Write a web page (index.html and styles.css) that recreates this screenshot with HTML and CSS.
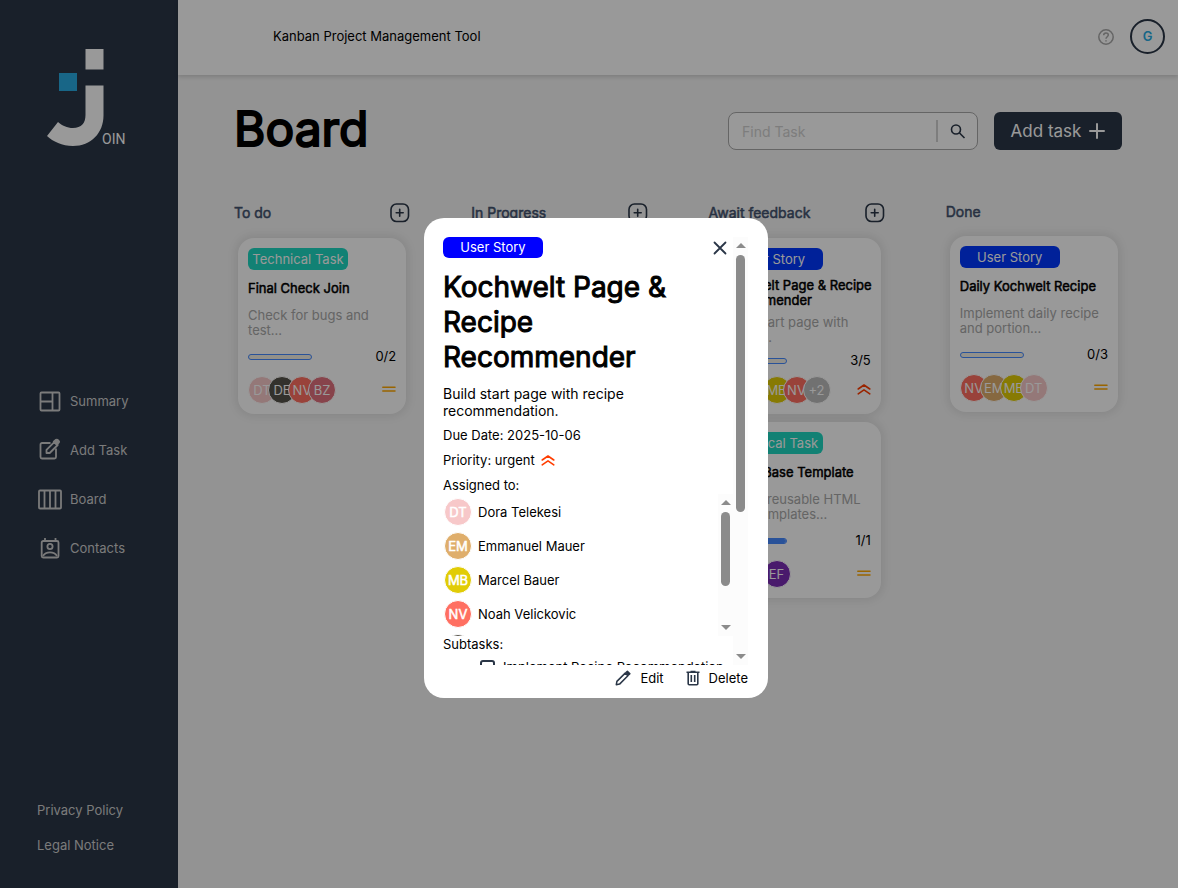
FILE: index.html
```html
<!DOCTYPE html>
<html lang="en">
<head>
<meta charset="utf-8">
<meta name="viewport" content="width=device-width, initial-scale=1">
<title>Join – Board</title>
<link rel="stylesheet" href="styles.css">
</head>
<body>
<svg class="sprite" aria-hidden="true">
  <symbol id="plus-box" viewBox="0 0 20 20"><rect x="1" y="1" width="17.500" height="17.500" rx="5.5" fill="none" stroke="#2a3647" stroke-width="1.6"/><path d="M9.700 6.200v7M6.200 9.700h7" stroke="#2a3647" stroke-width="1.6" stroke-linecap="round"/></symbol>
  <symbol id="medium" viewBox="0 0 14 8"><path d="M.8 1.200h12.200M.8 5h12.200" stroke="#ffa800" stroke-width="1.5" stroke-linecap="round"/></symbol>
  <symbol id="urgent" viewBox="0 0 14 12"><path d="M1.200 5L7 1l5.800 4M1.200 9.800L7 5.800l5.800 4" fill="none" stroke="#ff3d00" stroke-width="1.6" stroke-linecap="round" stroke-linejoin="round"/></symbol>
</svg>

<div class="app">
  <aside class="sidebar">
    <a class="logo" href="#" aria-label="Join">
      <svg width="80" height="98" viewBox="0 0 80 98">
        <path d="M38.5 0h18v20.500h-18z" fill="#fff"/>
        <path d="M12 24h18v18H12z" fill="#29abe2"/>
        <path d="M38.500 36.500h18v30C56.500 84 44 97 26 97 15 97 6 92.500 0 87l11-14c4 3.500 9 6 15 6 8.500 0 12.500-5 12.500-13z" fill="#fff"/>
        <text class="logo-text" x="55" y="95">OIN</text>
      </svg>
    </a>
    <nav class="nav">
      <a href="#"><svg width="24" height="24" viewBox="0 0 24 24" fill="none" stroke="currentColor" stroke-width="1.800"><rect x="2.500" y="3.500" width="19" height="18" rx="1"/><path d="M14.500 3.500v18M3 12.500h11.500"/></svg>Summary</a>
      <a href="#"><svg width="24" height="24" viewBox="0 0 24 24" fill="none" stroke="currentColor" stroke-width="1.800"><path d="M12.500 5H4a1.500 1.500 0 0 0-1.500 1.500V19A1.500 1.500 0 0 0 4 20.500h12.500A1.500 1.500 0 0 0 18 19v-8.500"/><path d="M8.500 15v-3.200l8-8 3.200 3.200-8 8z" stroke-linejoin="round"/><path d="M16 3.500l2-1.700c.7-.4 1.500-.2 2 .4l.6.600c.6.600.6 1.300.1 1.900l-2 2z" fill="currentColor"/></svg>Add Task</a>
      <a href="#"><svg width="24" height="24" viewBox="0 0 24 24" fill="none" stroke="currentColor" stroke-width="1.800"><rect x="1" y="3.500" width="22" height="18" rx="1"/><path d="M6.500 3.500v18M12 3.500v18M17.500 3.500v18"/></svg>Board</a>
      <a href="#"><svg width="24" height="24" viewBox="0 0 24 24" fill="none" stroke="currentColor" stroke-width="1.800"><rect x="3.700" y="5" width="16.800" height="16.500" rx="1.500"/><path d="M7 2v3M17.500 2v3"/><circle cx="12" cy="10.500" r="2.600"/><path d="M5 20c1.500-2.500 4-3.600 7-3.600s5.500 1.100 7 3.600"/></svg>Contacts</a>
    </nav>
    <div class="legal"><a href="#">Privacy Policy</a><a href="#">Legal Notice</a></div>
  </aside>

  <div class="page">
    <header class="topbar">
      <span>Kanban Project Management Tool</span>
      <div class="topbar-tools">
        <a href="#" aria-label="Help"><svg width="16" height="16" viewBox="0 0 16 16" fill="none" stroke="#a8a8a8" stroke-width="1.500"><circle cx="8" cy="8" r="7.200"/><path d="M5.700 6.300C5.700 4.900 6.700 4 8 4s2.300.9 2.300 2.100C10.300 7.600 8 7.900 8 9.800M8 11.200v1.400"/></svg></a>
        <button class="user" type="button">G</button>
      </div>
    </header>

    <main class="main">
      <div class="board-head">
        <h1>Board</h1>
        <div class="board-tools">
          <form class="search">
            <input type="search" placeholder="Find Task" aria-label="Find Task">
            <button type="button" aria-label="Search"><svg width="16" height="16" viewBox="0 0 16 16" fill="none" stroke="#2a3647" stroke-width="1.600"><circle cx="6" cy="6.500" r="4.500"/><path d="M9.300 9.800l5.200 5.200"/></svg></button>
          </form>
          <button class="add-task" type="button">Add task<svg width="16" height="16" viewBox="0 0 16 16" stroke="#fff" stroke-width="2" stroke-linecap="round"><path d="M8 1v14M1 8h14"/></svg></button>
        </div>
      </div>

      <div class="columns">
        <section class="column">
          <div class="column-head"><h2>To do</h2><button type="button" aria-label="Add to To do"><svg width="20" height="20"><use href="#plus-box"/></svg></button></div>
          <div class="cards">
            <article class="card">
              <span class="badge technical">Technical Task</span>
              <h3>Final Check Join</h3>
              <p>Check for bugs and test...</p>
              <div class="progress-row"><div class="progress"></div><span>0/2</span></div>
              <div class="card-foot"><div class="avatars"><span class="avatar pink">DT</span><span class="avatar dark">DE</span><span class="avatar coral">NV</span><span class="avatar rose">BZ</span></div><svg width="14" height="8"><use href="#medium"/></svg></div>
            </article>
          </div>
        </section>
        <section class="column">
          <div class="column-head"><h2>In Progress</h2><button type="button" aria-label="Add to In Progress"><svg width="20" height="20"><use href="#plus-box"/></svg></button></div>
        </section>
        <section class="column">
          <div class="column-head"><h2>Await feedback</h2><button type="button" aria-label="Add to Await feedback"><svg width="20" height="20"><use href="#plus-box"/></svg></button></div>
          <div class="cards">
            <article class="card">
              <span class="badge story">User Story</span>
              <h3>Kochwelt Page &amp; Recipe Recommender</h3>
              <p>Build start page with recipe...</p>
              <div class="progress-row"><div class="progress"><div class="progress-fill" style="width:60%"></div></div><span>3/5</span></div>
              <div class="card-foot"><div class="avatars"><span class="avatar pink">DT</span><span class="avatar sand">EM</span><span class="avatar yellow">MB</span><span class="avatar coral">NV</span><span class="avatar more">+2</span></div><svg width="14" height="12"><use href="#urgent"/></svg></div>
            </article>
            <article class="card">
              <span class="badge technical">Technical Task</span>
              <h3>HTML Base Template</h3>
              <p>Create reusable HTML base templates...</p>
              <div class="progress-row"><div class="progress"><div class="progress-fill" style="width:100%"></div></div><span>1/1</span></div>
              <div class="card-foot"><div class="avatars"><span class="avatar dark">DE</span><span class="avatar rose">BZ</span><span class="avatar purple">EF</span></div><svg width="14" height="8"><use href="#medium"/></svg></div>
            </article>
          </div>
        </section>
        <section class="column">
          <div class="column-head"><h2>Done</h2></div>
          <div class="cards">
            <article class="card">
              <span class="badge story">User Story</span>
              <h3>Daily Kochwelt Recipe</h3>
              <p>Implement daily recipe and portion...</p>
              <div class="progress-row"><div class="progress"></div><span>0/3</span></div>
              <div class="card-foot"><div class="avatars"><span class="avatar coral">NV</span><span class="avatar sand">EM</span><span class="avatar yellow">MB</span><span class="avatar pink">DT</span></div><svg width="14" height="8"><use href="#medium"/></svg></div>
            </article>
          </div>
        </section>
      </div>
    </main>
  </div>
</div>

<div class="overlay">
  <div class="dialog" role="dialog" aria-modal="true" aria-labelledby="task-title">
    <div class="scroll-pane dialog-pane">
      <div class="scroll-content">
        <div class="dialog-head">
          <span class="badge dialog-badge">User Story</span>
          <button type="button" aria-label="Close"><svg width="14" height="14" viewBox="0 0 14 14" stroke="#2a3647" stroke-width="1.800" stroke-linecap="round"><path d="M1.500 1.500l11 11M12.500 1.500l-11 11"/></svg></button>
        </div>
        <h2 class="dialog-title" id="task-title">Kochwelt Page &amp; Recipe Recommender</h2>
        <p class="dialog-desc">Build start page with recipe recommendation.</p>
        <p class="field">Due Date: 2025-10-06</p>
        <p class="field">Priority: urgent <svg width="14" height="12"><use href="#urgent"/></svg></p>
        <p class="field">Assigned to:</p>
        <div class="scroll-pane people-pane">
          <ul class="scroll-content people">
            <li><span class="avatar pink">DT</span>Dora Telekesi</li>
            <li><span class="avatar sand">EM</span>Emmanuel Mauer</li>
            <li><span class="avatar yellow">MB</span>Marcel Bauer</li>
            <li><span class="avatar coral">NV</span>Noah Velickovic</li>
            <li><span class="avatar dark"></span></li>
          </ul>
          <div class="scrollbar" aria-hidden="true"><i class="arrow up"></i><i class="thumb people-thumb"></i><i class="arrow down"></i></div>
        </div>
        <p class="subtasks-label">Subtasks:</p>
        <label class="subtask"><input type="checkbox">Implement Recipe Recommendation</label>
      </div>
      <div class="scrollbar" aria-hidden="true"><i class="arrow up"></i><i class="thumb dialog-thumb"></i><i class="arrow down"></i></div>
    </div>
    <div class="dialog-actions">
      <button type="button"><svg width="16" height="16" viewBox="0 0 16 16" fill="none" stroke="#2a3647" stroke-width="1.500" stroke-linejoin="round"><path d="M1.300 14.700l.6-3.300 8.300-8.300 2.700 2.700-8.300 8.300z"/><path d="M11 2.500l1.400-1.300 2.500 2.500-1.400 1.300z" fill="#2a3647"/></svg>Edit</button>
      <button type="button"><svg width="14" height="16" viewBox="0 0 14 16" fill="none" stroke="#2a3647" stroke-width="1.600"><path d="M.5 2.300h13M4.500 1.500h5M2.200 2.500v11.200c0 .6.400 1 1 1h7.600c.6 0 1-.4 1-1V2.500M5.300 5v7M8.700 5v7"/></svg>Delete</button>
    </div>
  </div>
</div>
</body>
</html>
```

FILE: styles.css
```css
* { box-sizing: border-box; }

body {
  margin: 0;
  font: 13px/15px Inter, "Liberation Sans", sans-serif;
  color: #000;
}

h1, h2, h3, p, ul { margin: 0; padding: 0; font-weight: 400; }
ul { list-style: none; }
a { color: inherit; text-decoration: none; }
svg { display: block; flex: none; }
button {
  display: flex;
  align-items: center;
  justify-content: center;
  padding: 0;
  border: 0;
  background: none;
  font: inherit;
  color: inherit;
  cursor: pointer;
}

.sprite { position: absolute; width: 0; height: 0; }

.app { display: flex; min-height: 100vh; }

/* Sidebar */
.sidebar {
  display: flex;
  flex-direction: column;
  flex: none;
  width: 178px;
  padding: 49px 0 35px;
  background: #2a3647;
  color: #cdcdcd;
}
.logo { margin-left: 47px; }
.logo-text { font: 14px "Liberation Sans Narrow", Roboto, sans-serif; fill: #fff; }
.nav { display: flex; flex-direction: column; gap: 25px; margin: 242px 0 auto 38px; }
.nav a { display: flex; align-items: center; gap: 8px; }
.legal { display: flex; flex-direction: column; gap: 20px; margin-left: 37px; }

/* Top bar */
.page { flex: 1; min-width: 0; background: #f5f5f5; }
.topbar {
  display: flex;
  align-items: center;
  justify-content: space-between;
  height: 75px;
  padding: 0 13px 2px 95px;
  background: #fff;
  box-shadow: 0 2px 4px rgba(0, 0, 0, 0.15);
}
.topbar-tools { display: flex; align-items: center; gap: 16px; }
.user {
  width: 35px;
  height: 35px;
  border: 2px solid #2a3647;
  border-radius: 50%;
  color: #29abe2;
  font-weight: 600;
}

/* Board heading */
.main { padding: 25px 56px; }
.board-head { display: flex; justify-content: space-between; align-items: center; }
h1 { font-size: 48px; line-height: 58px; -webkit-text-stroke: 2px #000; }
.board-tools { display: flex; gap: 16px; padding-top: 4px; }
.search {
  display: flex;
  width: 250px;
  height: 38px;
  padding: 7px 0;
  border: 1px solid #a8a8a8;
  border-radius: 8px;
  background: #fff;
}
.search input {
  flex: 1;
  min-width: 0;
  padding: 0 13px;
  border: 0;
  border-right: 2px solid #d1d1d1;
  background: none;
  font: 14px Inter, sans-serif;
  outline: 0;
}
.search input::placeholder { color: #d1d1d1; }
.search button { width: 39px; }
.add-task {
  gap: 8px;
  width: 128px;
  height: 38px;
  border-radius: 6px;
  background: #2a3647;
  color: #fff;
  font-size: 17px;
}

/* Columns and cards */
.columns { display: grid; grid-template-columns: repeat(4, 1fr); gap: 60px; margin: 45px -1px 0 0; }
.column-head { display: flex; align-items: center; justify-content: space-between; padding-right: 1px; }
.column-head h2 {
  font-size: 14px;
  line-height: 18px;
  color: #42526e;
  -webkit-text-stroke: 0.5px #42526e;
  white-space: nowrap;
}
.cards { display: flex; flex-direction: column; gap: 8px; padding: 15px 5px 0 4px; }
.card {
  display: flex;
  flex-direction: column;
  justify-content: space-between;
  height: 176px;
  padding: 10px;
  border-radius: 16px;
  background: #fff;
  box-shadow: 0 0 8px 3px rgba(0, 0, 0, 0.08);
}
.badge {
  flex: none;
  width: 100px;
  height: 22px;
  border-radius: 6px;
  color: #fff;
  line-height: 22px;
  text-align: center;
}
.technical { background: #1fd7c1; }
.story { background: #0038ff; }
.card h3 { margin-right: -6px; font-size: 13px; -webkit-text-stroke: 0.5px #000; }
.card p { color: #a8a8a8; }
.progress-row { display: flex; align-items: center; justify-content: space-between; height: 16px; }
.progress {
  width: 64px;
  height: 6px;
  border: 1px solid #4589ff;
  border-radius: 4px;
  background: #f4f0e6;
  overflow: hidden;
}
.progress-fill { height: 100%; background: #4589ff; }
.card-foot { display: flex; align-items: center; justify-content: space-between; }
.avatars { display: flex; }
.avatars .avatar + .avatar { margin-left: -8px; }
.avatar {
  flex: none;
  width: 28px;
  height: 28px;
  border: 1px solid #fff;
  border-radius: 50%;
  color: #fff;
  line-height: 26px;
  text-align: center;
}
.pink { background: #f7c8c9; }
.dark { background: #56534a; }
.coral { background: #ff6f61; }
.rose { background: #e2707d; }
.sand { background: #dfae6b; }
.yellow { background: #e1cc06; }
.purple { background: #7b2cb5; }
.more { background: #bdbdbd; }

/* Task dialog */
.overlay {
  position: fixed;
  inset: 0;
  display: flex;
  align-items: center;
  justify-content: center;
  padding: 28px 0 0 14px;
  background: rgba(0, 0, 0, 0.4);
}
.dialog {
  display: flex;
  flex-direction: column;
  width: 344px;
  height: 480px;
  padding: 19px 20px 12px 19px;
  border-radius: 20px;
  background: #fff;
}
.scroll-pane { display: flex; overflow: hidden; }
.scroll-content { flex: 1; min-width: 0; }
.dialog-pane { flex: 1; min-height: 0; }
.dialog-head { display: flex; align-items: center; justify-content: space-between; padding-right: 6px; }
.dialog-badge { height: 21px; line-height: 21px; background: #00f; }
.dialog-title {
  margin: 12px 0 10px;
  font-size: 28px;
  line-height: 35px;
  -webkit-text-stroke: 1px #000;
}
.dialog-desc { font-size: 14px; line-height: 17px; }
.field { display: flex; align-items: center; gap: 6px; margin-top: 8px; line-height: 17px; }
.people-pane { height: 142px; }
.people li { display: flex; align-items: center; gap: 6px; height: 34px; padding: 2px 0 0 1px; }
.people .avatar { -webkit-text-stroke: 0.5px #fff; }
.subtasks-label { line-height: 17px; }
.subtask { display: flex; align-items: center; gap: 8px; margin: 7px 0 0 37px; white-space: nowrap; }
.subtask input {
  appearance: none;
  width: 15px;
  height: 15px;
  margin: 0;
  border: 2px solid #2a3647;
  border-radius: 3px;
}

.scrollbar {
  display: flex;
  flex-direction: column;
  align-items: center;
  flex: none;
  width: 15px;
  padding: 6px 0;
  background: #fcfcfc;
}
.arrow { border: 5px solid transparent; }
.up { border-top: 0; border-bottom-color: #8b8b8b; }
.down { margin-top: auto; border-bottom: 0; border-top-color: #8b8b8b; }
.thumb { width: 9px; margin-top: 7px; border-radius: 5px; background: #8b8b8b; }
.dialog-thumb { height: 257px; }
.people-thumb { height: 74px; }

.dialog-actions { display: flex; justify-content: flex-end; gap: 22px; padding-top: 5px; }
.dialog-actions button { gap: 9px; }
```
